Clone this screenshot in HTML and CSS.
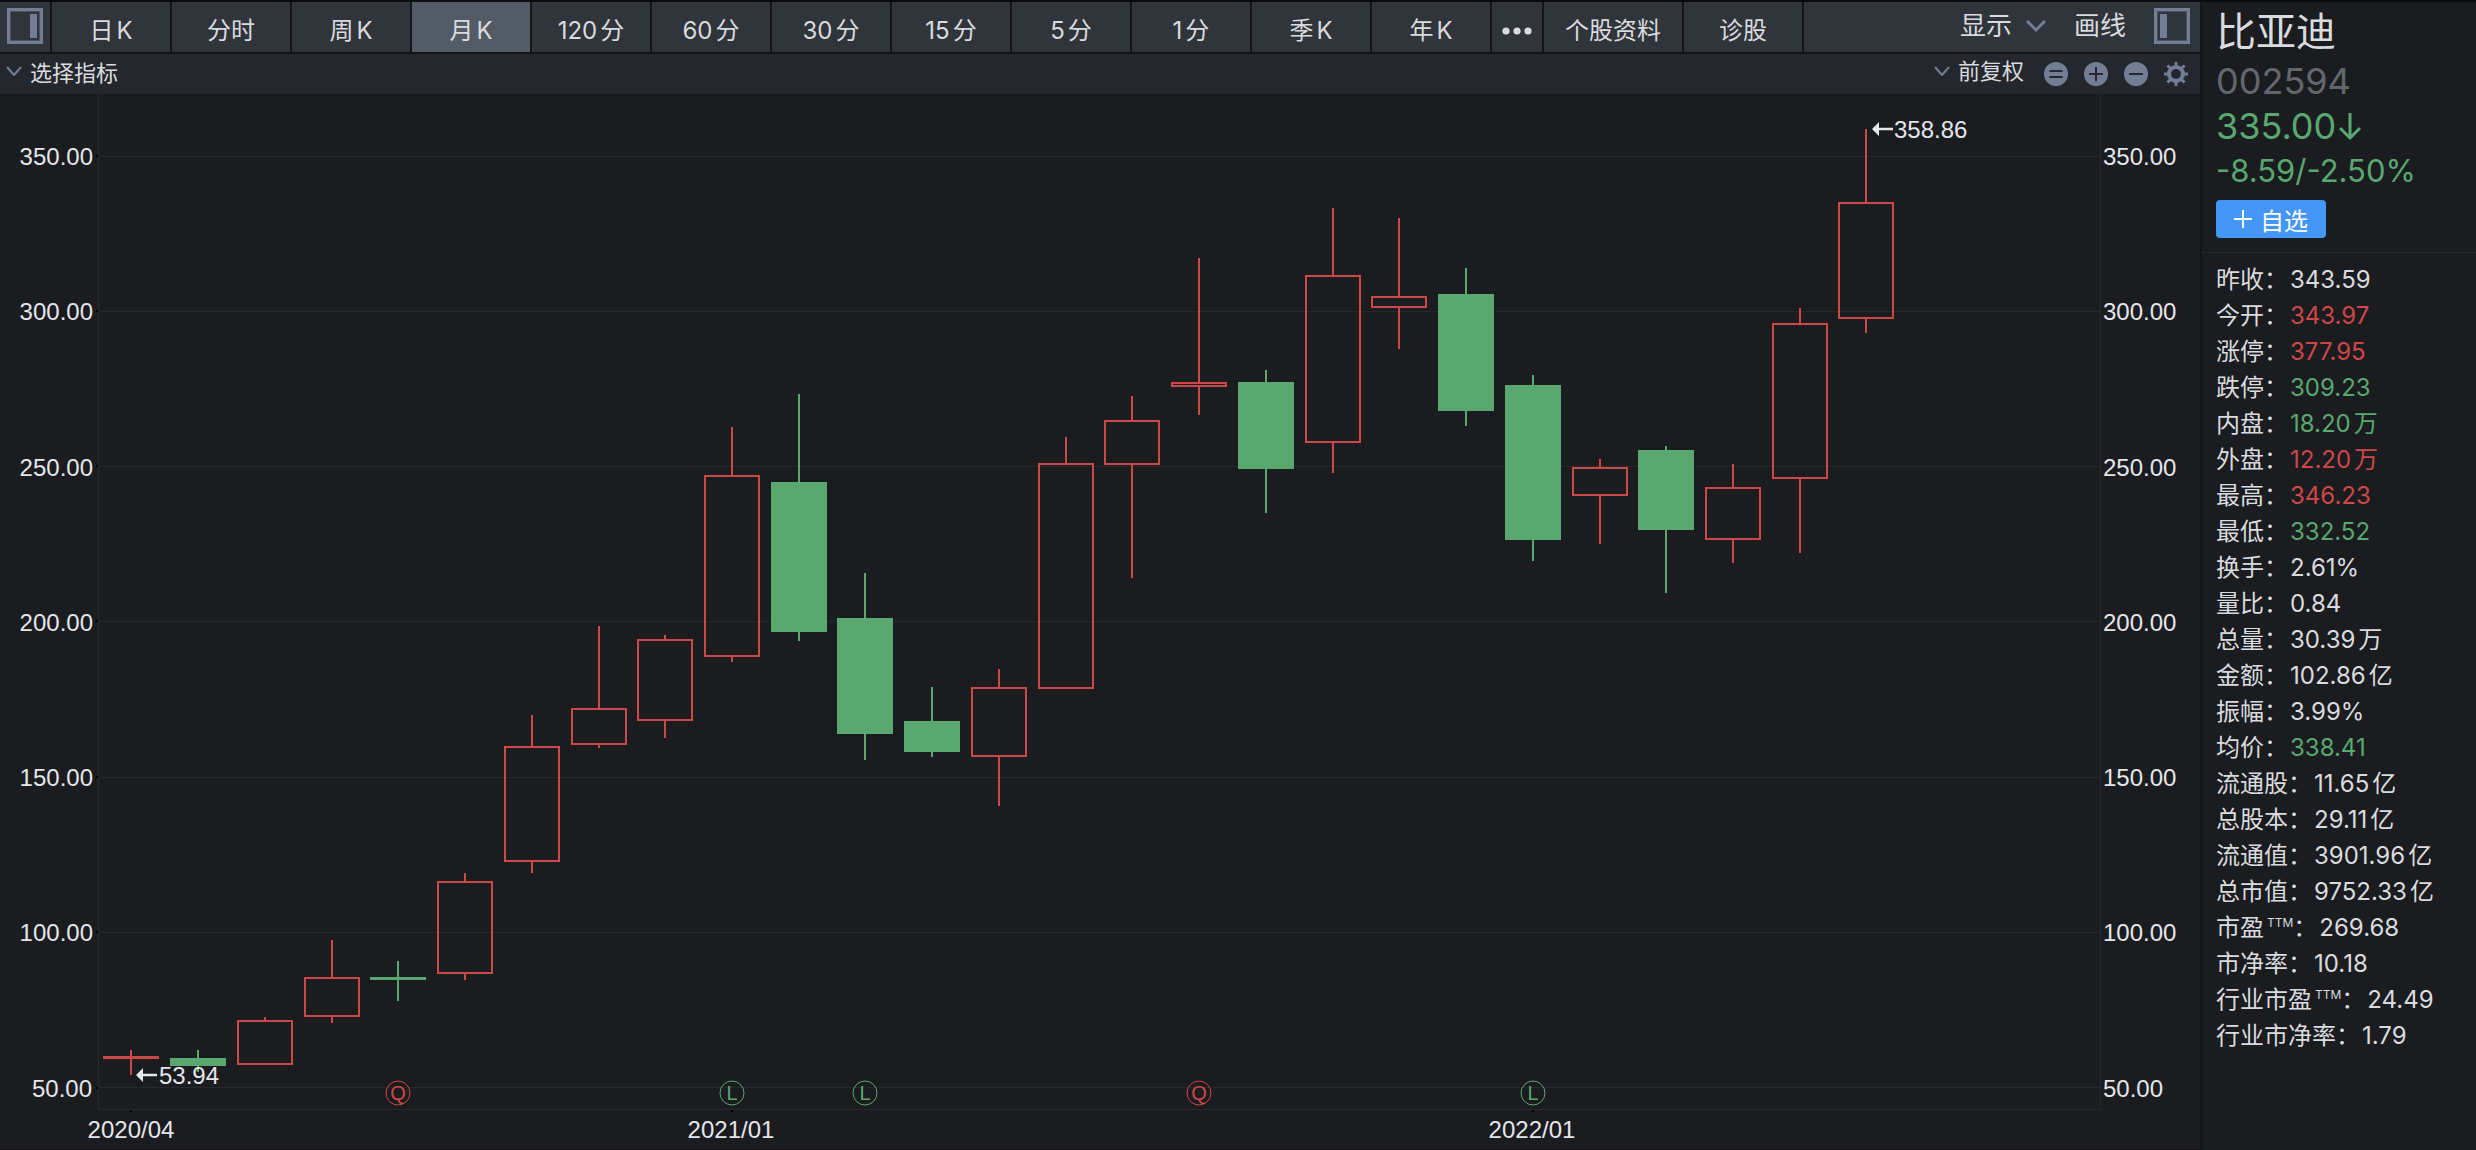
FILE: index.html
```html
<!DOCTYPE html>
<html lang="zh-CN">
<head>
<meta charset="utf-8">
<title>比亚迪 002594</title>
<link rel="stylesheet" href="styles.css">
</head>
<body>
<div class="app">
  <main class="main">
    <nav class="toolbar" aria-label="周期">
      <button class="tab tab-icon" aria-label="左侧面板">
        <svg class="panel-icon" viewBox="0 0 36 36"><rect x="1.5" y="1.5" width="33" height="33"/><rect class="panel-inner" x="3.5" y="3.5" width="29" height="29"/><path d="M23 6h7v24h-7z"/></svg>
      </button>
      <button class="tab">日K</button>
      <button class="tab">分时</button>
      <button class="tab">周K</button>
      <button class="tab active">月K</button>
      <button class="tab">120分</button>
      <button class="tab">60分</button>
      <button class="tab">30分</button>
      <button class="tab">15分</button>
      <button class="tab">5分</button>
      <button class="tab">1分</button>
      <button class="tab">季K</button>
      <button class="tab">年K</button>
      <button class="tab tab-icon" aria-label="更多">
        <svg class="dots" viewBox="0 0 30 8"><circle cx="4" cy="4" r="3.6"/><circle cx="15" cy="4" r="3.6"/><circle cx="26" cy="4" r="3.6"/></svg>
      </button>
      <button class="tab tab-wide">个股资料</button>
      <button class="tab">诊股</button>
      <div class="tools">
        <button class="tool">显示<svg class="chevron" viewBox="0 0 20 12"><path d="M1 1l9 9 9-9"/></svg></button>
        <button class="tool">画线</button>
        <button class="tool" aria-label="右侧面板">
          <svg class="panel-icon" viewBox="0 0 36 36"><rect x="1.5" y="1.5" width="33" height="33"/><rect class="panel-inner" x="3.5" y="3.5" width="29" height="29"/><path d="M6 6h7v24H6z"/></svg>
        </button>
      </div>
    </nav>
    <div class="subbar">
      <button class="pick"><svg class="chevron small" viewBox="0 0 16 10"><path d="M1 1l7 8 7-8"/></svg>选择指标</button>
      <div class="subtools">
        <label class="pick"><svg class="chevron small" viewBox="0 0 16 10"><path d="M1 1l7 8 7-8"/></svg>
          <select class="select" aria-label="复权方式"><option>前复权</option><option>后复权</option><option>不复权</option></select>
        </label>
        <button class="round" aria-label="还原"><svg viewBox="0 0 24 24"><circle cx="12" cy="12" r="12"/><path d="M5.500 9h13M5.500 15h13"/></svg></button>
        <button class="round" aria-label="放大"><svg viewBox="0 0 24 24"><circle cx="12" cy="12" r="12"/><path d="M5 12h14M12 5v14"/></svg></button>
        <button class="round" aria-label="缩小"><svg viewBox="0 0 24 24"><circle cx="12" cy="12" r="12"/><path d="M5 12h14"/></svg></button>
        <button class="round" aria-label="设置"><svg viewBox="0 0 24 24"><circle class="gear-ring" cx="12" cy="12" r="7"/><path class="gear-teeth" d="M12 0v4M12 20v4M0 12h4M20 12h4M3.500 3.500l3 3M17.500 17.500l3 3M20.500 3.500l-3 3M6.500 17.500l-3 3"/></svg></button>
      </div>
    </div>
    <svg class="chart" viewBox="0 94 2200 1055" role="img" aria-label="月K线图">
      <g class="grid">
        <path d="M98 156.500H2100M98 311.500H2100M98 466.500H2100M98 621.500H2100M98 777.500H2100M98 932.500H2100M98 1087.500H2100"/>
        <path d="M98.500 94V1109.500H2100.500V94"/>
      </g>
      <path class="ticks" d="M96 156h2M96 311h2M96 466h2M96 621h2M96 777h2M96 932h2M96 1088h2M131 1110v2M732 1110v2M1533 1110v2"/>
      <g class="axis left">
        <text x="93" y="165">350.00</text><text x="93" y="320">300.00</text><text x="93" y="476">250.00</text><text x="93" y="631">200.00</text><text x="93" y="786">150.00</text><text x="93" y="941">100.00</text><text x="92" y="1097">50.00</text>
      </g>
      <g class="axis">
        <text x="2103" y="165">350.00</text><text x="2103" y="320">300.00</text><text x="2103" y="476">250.00</text><text x="2103" y="631">200.00</text><text x="2103" y="786">150.00</text><text x="2103" y="941">100.00</text><text x="2103" y="1097">50.00</text>
      </g>
      <g class="axis dates">
        <text x="131" y="1138">2020/04</text><text x="731" y="1138">2021/01</text><text x="1532" y="1138">2022/01</text>
      </g>
      <g class="up">
        <path d="M131 1050V1056M131 1059V1075"/><rect x="104" y="1057" width="54" height="1"/>
        <path d="M265 1017V1020"/><rect x="238" y="1021" width="54" height="43"/>
        <path d="M332 940V977M332 1017V1023"/><rect x="305" y="978" width="54" height="38"/>
        <path d="M465 873V881M465 974V980"/><rect x="438" y="882" width="54" height="91"/>
        <path d="M532 715V746M532 862V873"/><rect x="505" y="747" width="54" height="114"/>
        <path d="M599 626V708M599 745V748"/><rect x="572" y="709" width="54" height="35"/>
        <path d="M665 635V639M665 721V738"/><rect x="638" y="640" width="54" height="80"/>
        <path d="M732 427V475M732 657V662"/><rect x="705" y="476" width="54" height="180"/>
        <path d="M999 669V687M999 757V806"/><rect x="972" y="688" width="54" height="68"/>
        <path d="M1066 437V463"/><rect x="1039" y="464" width="54" height="224"/>
        <path d="M1132 396V420M1132 465V578"/><rect x="1105" y="421" width="54" height="43"/>
        <path d="M1199 258V382M1199 387V415"/><rect x="1172" y="383" width="54" height="3"/>
        <path d="M1333 208V275M1333 443V473"/><rect x="1306" y="276" width="54" height="166"/>
        <path d="M1399 218V296M1399 308V349"/><rect x="1372" y="297" width="54" height="10"/>
        <path d="M1600 459V467M1600 496V544"/><rect x="1573" y="468" width="54" height="27"/>
        <path d="M1733 464V487M1733 540V563"/><rect x="1706" y="488" width="54" height="51"/>
        <path d="M1800 308V323M1800 479V553"/><rect x="1773" y="324" width="54" height="154"/>
        <path d="M1866 129V202M1866 319V333"/><rect x="1839" y="203" width="54" height="115"/>
      </g>
      <g class="down">
        <path d="M198 1050V1072"/><rect x="170" y="1058" width="56" height="8"/>
        <path d="M398 961V1001"/><rect x="370" y="977" width="56" height="3"/>
        <path d="M799 394V641"/><rect x="771" y="482" width="56" height="150"/>
        <path d="M865 573V760"/><rect x="837" y="618" width="56" height="116"/>
        <path d="M932 687V757"/><rect x="904" y="721" width="56" height="31"/>
        <path d="M1266 370V513"/><rect x="1238" y="382" width="56" height="87"/>
        <path d="M1466 268V426"/><rect x="1438" y="294" width="56" height="117"/>
        <path d="M1533 375V561"/><rect x="1505" y="385" width="56" height="155"/>
        <path d="M1666 446V593"/><rect x="1638" y="450" width="56" height="80"/>
      </g>
      <g class="axis">
        <path d="M136 1075l7-7v5.800h14v2.400h-14v5.800z"/><text x="159" y="1084">53.94</text>
        <path d="M1872 129l7-7v5.800h14v2.400h-14v5.800z"/><text x="1894" y="138">358.86</text>
      </g>
      <g class="mark red"><circle cx="398" cy="1093" r="12"/><text x="398" y="1100">Q</text></g>
      <g class="mark green"><circle cx="732" cy="1093" r="12"/><text x="732" y="1100">L</text></g>
      <g class="mark green"><circle cx="865" cy="1093" r="12"/><text x="865" y="1100">L</text></g>
      <g class="mark red"><circle cx="1199" cy="1093" r="12"/><text x="1199" y="1100">Q</text></g>
      <g class="mark green"><circle cx="1533" cy="1093" r="12"/><text x="1533" y="1100">L</text></g>
    </svg>
  </main>
  <aside class="side">
    <header class="quote">
      <h1 class="name">比亚迪</h1>
      <div class="code">002594</div>
      <div class="price">335.00<svg class="arrow" viewBox="0 0 24 28"><path d="M12 1v25M2 16l10 10 10-10"/></svg></div>
      <div class="change">-8.59/-2.50%</div>
      <button class="add"><svg class="plus" viewBox="0 0 18 18"><path d="M0 9h18M9 0v18"/></svg>自选</button>
    </header>
    <dl class="stats">
      <div class="row"><dt>昨收：</dt><dd>343.59</dd></div>
      <div class="row"><dt>今开：</dt><dd class="rise">343.97</dd></div>
      <div class="row"><dt>涨停：</dt><dd class="rise">377.95</dd></div>
      <div class="row"><dt>跌停：</dt><dd class="fall">309.23</dd></div>
      <div class="row"><dt>内盘：</dt><dd class="fall">18.20万</dd></div>
      <div class="row"><dt>外盘：</dt><dd class="rise">12.20万</dd></div>
      <div class="row"><dt>最高：</dt><dd class="rise">346.23</dd></div>
      <div class="row"><dt>最低：</dt><dd class="fall">332.52</dd></div>
      <div class="row"><dt>换手：</dt><dd>2.61%</dd></div>
      <div class="row"><dt>量比：</dt><dd>0.84</dd></div>
      <div class="row"><dt>总量：</dt><dd>30.39万</dd></div>
      <div class="row"><dt>金额：</dt><dd>102.86亿</dd></div>
      <div class="row"><dt>振幅：</dt><dd>3.99%</dd></div>
      <div class="row"><dt>均价：</dt><dd class="fall">338.41</dd></div>
      <div class="row"><dt>流通股：</dt><dd>11.65亿</dd></div>
      <div class="row"><dt>总股本：</dt><dd>29.11亿</dd></div>
      <div class="row"><dt>流通值：</dt><dd>3901.96亿</dd></div>
      <div class="row"><dt>总市值：</dt><dd>9752.33亿</dd></div>
      <div class="row"><dt>市盈<sup>TTM</sup>：</dt><dd>269.68</dd></div>
      <div class="row"><dt>市净率：</dt><dd>10.18</dd></div>
      <div class="row"><dt>行业市盈<sup>TTM</sup>：</dt><dd>24.49</dd></div>
      <div class="row"><dt>行业市净率：</dt><dd>1.79</dd></div>
    </dl>
  </aside>
</div>
</body>
</html>
```
FILE: styles.css
```css
:root {
  --bg: #1b1c20;
  --bar: #30343b;
  --line: #26282c;
  --edge: #131518;
  --text: #d9dbdf;
  --icon: #717e95;
  --red: #cc4846;
  --green: #58a86f;
}

* { box-sizing: border-box; }

body {
  margin: 0;
  background: var(--bg);
  color: var(--text);
  font-family: Inter, "Noto Sans CJK SC", sans-serif;
  font-size: 24px;
  text-autospace: normal;
}

button, select {
  margin: 0;
  padding: 0;
  border: 0;
  background: none;
  color: inherit;
  font: inherit;
  text-autospace: inherit;
}

svg { display: block; fill: none; }

.app { display: flex; min-height: 100vh; border-top: 2px solid #0b0c0d; }

.main { flex: 1; min-width: 0; border-bottom: 1px solid #131216; }

.toolbar {
  display: flex;
  gap: 2px;
  height: 52px;
  background: var(--edge);
  border-bottom: 2px solid var(--edge);
}

.tab {
  flex: 0 1 118px;
  display: flex;
  align-items: center;
  justify-content: center;
  padding-top: 2px;
  background: var(--bar);
  white-space: nowrap;
}
.tab.active { background: #535b66; }
.tab-icon { flex-basis: 50px; padding: 0 0 2px; }
.tab-wide { flex-basis: 138px; }

.panel-icon { width: 36px; height: 36px; stroke: var(--icon); stroke-width: 3; }
.panel-icon path { fill: var(--icon); stroke: none; }
.panel-icon .panel-inner { stroke: #4b5361; stroke-width: 1; }
.dots { width: 30px; height: 8px; margin-top: 10px; fill: var(--text); }

.tools {
  flex: 1;
  display: flex;
  align-items: center;
  justify-content: flex-end;
  gap: 28px;
  padding: 0 10px 2px 0;
  background: var(--bar);
  font-size: 26px;
  line-height: 36px;
}
.tool { display: flex; align-items: center; gap: 14px; white-space: nowrap; }

.chevron { width: 20px; height: 12px; stroke: var(--icon); stroke-width: 3; }
.chevron.small { width: 16px; height: 10px; stroke-width: 2; }

.subbar {
  display: flex;
  align-items: center;
  justify-content: space-between;
  height: 40px;
  padding: 0 12px 0 6px;
  background: #24272e;
  font-size: 22px;
}
.pick { display: flex; align-items: center; gap: 8px; padding-bottom: 6px; }
.select { appearance: none; width: 66px; }
.subtools { display: flex; align-items: center; gap: 16px; }
.subtools .pick { margin-right: 4px; }
.round svg { width: 24px; height: 24px; stroke: #24272e; stroke-width: 2; }
.round circle { fill: var(--icon); stroke: none; }
.round .gear-ring { fill: none; stroke: var(--icon); stroke-width: 4; }
.round .gear-teeth { stroke: var(--icon); stroke-width: 3; }

.chart { width: 100%; height: auto; }
.grid { stroke: var(--line); stroke-width: 1; }
.ticks { stroke: #000; stroke-width: 2; }
.axis { fill: #e4e6ea; font-family: "Liberation Sans", sans-serif; font-size: 24px; }
.axis.left { text-anchor: end; }
.axis.dates { text-anchor: middle; }
.up, .down { shape-rendering: crispEdges; stroke-width: 2; }
.up { stroke: var(--red); }
.down { stroke: var(--green); }
.down rect { fill: var(--green); stroke: none; }
.mark { font-family: "Liberation Sans", sans-serif; font-size: 20px; text-anchor: middle; }
.mark.red { fill: var(--red); stroke: var(--red); }
.mark.green { fill: var(--green); stroke: var(--green); }
.mark circle { fill: none; stroke-width: 1; }
.mark text { stroke: none; }

.side { flex: 0 0 276px; border-left: 2px solid var(--edge); }
.quote { padding: 0 14px 14px; border-bottom: 1px solid var(--line); }
.name { margin: 0; font-size: 40px; font-weight: 400; line-height: 60px; }
.code { color: #63676d; font-size: 36px; line-height: 38px; }
.price { display: flex; align-items: center; gap: 2px; color: var(--green); font-size: 36px; line-height: 52px; }
.arrow { width: 24px; height: 28px; stroke: var(--green); stroke-width: 3; }
.change { color: var(--green); font-size: 31px; line-height: 38px; }
.add {
  display: flex;
  align-items: center;
  justify-content: center;
  gap: 8px;
  width: 110px;
  height: 38px;
  margin-top: 10px;
  border-radius: 4px;
  background: #4497f7;
  color: #fff;
}
.plus { width: 18px; height: 18px; stroke: #fff; stroke-width: 2; }

.stats { margin: 0; padding: 9px 0 0 14px; }
.row { display: flex; gap: 2px; line-height: 36px; white-space: nowrap; }
.row dd { margin: 0; }
.row sup { font-size: 12px; line-height: 0; }
.rise { color: var(--red); }
.fall { color: var(--green); }
```
